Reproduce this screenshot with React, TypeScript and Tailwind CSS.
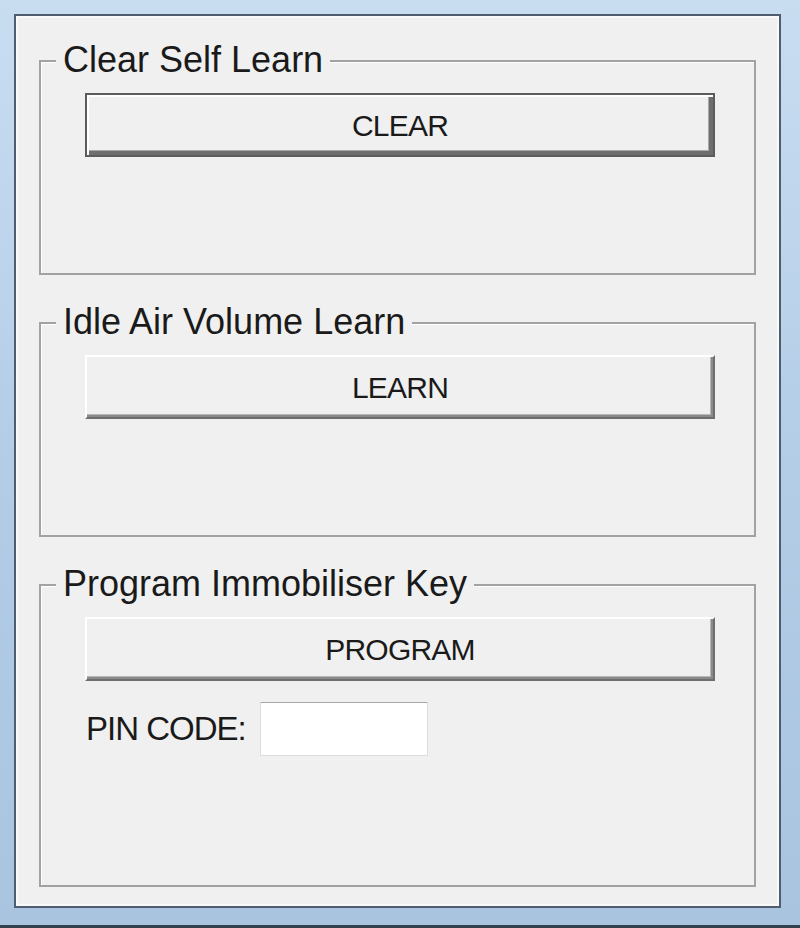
import React from 'react'

const font = "font-['Liberation_Sans',Arial,sans-serif]"

type GroupProps = {
  title: string
  height: string
  children: React.ReactNode
}

const GroupBox: React.FC<GroupProps> = ({ title, height, children }) => (
  <div className={`relative border-2 border-[#a2a2a2] shadow-[inset_1px_1px_0_#ffffff] ${height}`}>
    <span className="absolute left-[15px] top-[-22px] bg-[#f0f0f0] px-[7px] text-[36px] leading-[40px] text-[#1a1a1a] whitespace-nowrap">
      {title}
    </span>
    <div className="flex flex-col pl-[44px] pt-[31px]">{children}</div>
  </div>
)

const WinButton: React.FC<{ label: string; focused?: boolean }> = ({ label, focused }) => (
  <button
    type="button"
    className={
      focused
        ? 'flex h-[64px] w-[630px] items-center justify-center border-2 border-[#5c5c5c] bg-[#f0f0f0] text-[30px] tracking-[-0.8px] text-[#1a1a1a] shadow-[inset_2px_2px_0_#ffffff,inset_-4px_-4px_0_#6e6e6e,inset_-5px_-5px_0_#a8a8a8]'
        : 'flex h-[64px] w-[630px] items-center justify-center border-2 border-t-white border-l-white border-r-[#6e6e6e] border-b-[#6e6e6e] bg-[#f0f0f0] text-[30px] tracking-[-0.8px] text-[#1a1a1a] shadow-[inset_-2px_-2px_0_#8a8a8a,inset_-3px_-3px_0_#b8b8b8]'
    }
  >
    {label}
  </button>
)

export default function App() {
  return (
    <div
      className={`${font} h-[928px] w-[800px] overflow-hidden bg-gradient-to-b from-[#c9ddf1] via-[#b3cde7] to-[#a9c4df] pl-[14px] pr-[19px] pt-[14px] pb-[17px] border-b-[3px] border-b-[#33404d]`}
    >
      <div className="flex h-full flex-col border-2 border-[#4f5d6e] bg-[#f0f0f0] px-[23px] shadow-[inset_2px_2px_0_#fafafa,inset_-2px_-2px_0_#fafafa]">
        <div className="mt-[44px]">
          <GroupBox title="Clear Self Learn" height="h-[215px]">
            <WinButton label="CLEAR" focused />
          </GroupBox>
        </div>
        <div className="mt-[47px]">
          <GroupBox title="Idle Air Volume Learn" height="h-[215px]">
            <WinButton label="LEARN" />
          </GroupBox>
        </div>
        <div className="mt-[47px]">
          <GroupBox title="Program Immobiliser Key" height="h-[303px]">
            <WinButton label="PROGRAM" />
            <div className="mt-[21px] flex items-center">
              <span className="ml-[1px] text-[33px] tracking-[-1px] text-[#1a1a1a]">PIN CODE:</span>
              <input
                type="text"
                className="ml-[14px] h-[54px] w-[168px] border border-[#dcdcdc] border-t-[#a8a8a8] bg-white outline-none"
              />
            </div>
          </GroupBox>
        </div>
      </div>
    </div>
  )
}
